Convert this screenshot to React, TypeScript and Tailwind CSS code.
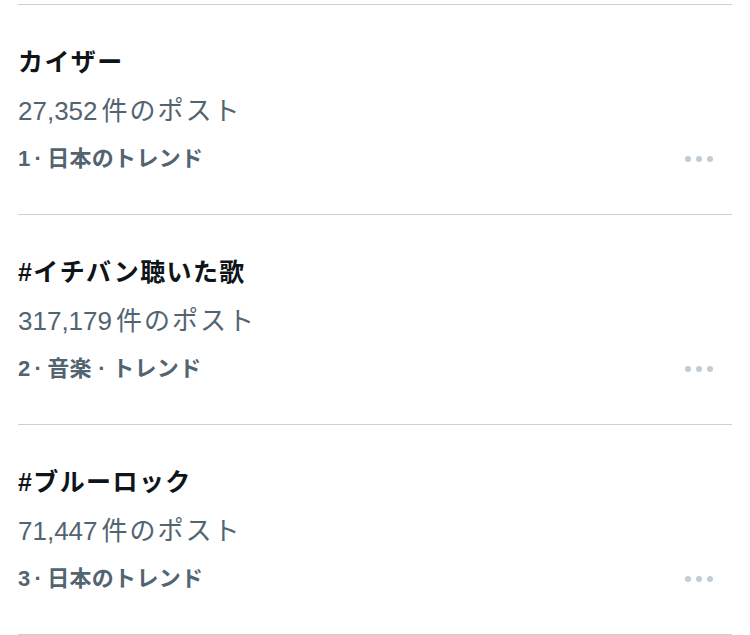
const trends = [
  { title: "カイザー", count: "27,352", rank: "1", meta: "日本のトレンド" },
  { title: "#イチバン聴いた歌", count: "317,179", rank: "2", meta: "音楽 · トレンド" },
  { title: "#ブルーロック", count: "71,447", rank: "3", meta: "日本のトレンド" },
];

function Dots() {
  return (
    <div className="flex items-center gap-[5px]">
      <span className="h-[6px] w-[6px] rounded-full bg-[#c0ccd6]" />
      <span className="h-[6px] w-[6px] rounded-full bg-[#c0ccd6]" />
      <span className="h-[6px] w-[6px] rounded-full bg-[#c0ccd6]" />
    </div>
  );
}

export default function App() {
  return (
    <div
      className="min-h-[635px] w-[750px] bg-white px-[18px] pt-[4px]"
      style={{ fontFamily: '"Liberation Sans", "Noto Sans CJK JP", sans-serif' }}
    >
      {trends.map((t) => (
        <div key={t.title} className="border-t border-[#cfcfcf] pb-[31px] pt-[32px]">
          <div className="text-[25px] font-bold leading-[50px] tracking-[1.4px] text-[#0f1419]">{t.title}</div>
          <div className="text-[26px] leading-[48px] text-[#536471]">
            {t.count}
            <span className="ml-[4px] tracking-[2px]">件のポスト</span>
          </div>
          <div className="flex items-center justify-between pr-[19px]">
            <div className="text-[22px] font-bold leading-[48px] tracking-[0.3px] text-[#536471]">
              {t.rank}
              <span className="ml-[4px] mr-[5px]">·</span>
              {t.meta}
            </div>
            <Dots />
          </div>
        </div>
      ))}
      <div className="border-t border-[#cfcfcf]" />
    </div>
  );
}
